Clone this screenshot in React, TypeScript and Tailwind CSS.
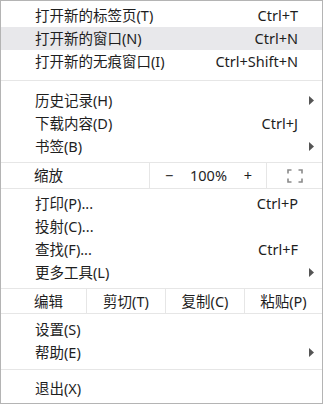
import React from "react";

type Item = { label: string; shortcut?: string; submenu?: boolean; active?: boolean };

const font = { fontFamily: '"Noto Sans", "Noto Sans CJK SC", sans-serif' };

function Arrow() {
  return (
    <svg width="5" height="9" viewBox="0 0 5 9" className="absolute right-[8px] top-[7px]">
      <path d="M0 0 L5 4.5 L0 9 Z" fill="#555" />
    </svg>
  );
}

function Row({ label, shortcut, submenu, active }: Item) {
  return (
    <div
      className={`relative flex h-[23px] items-center justify-between pl-[34px] pr-[24px] ${
        active ? "bg-[#e8e8eb]" : ""
      }`}
    >
      <span>{label}</span>
      {shortcut && <span>{shortcut}</span>}
      {submenu && <Arrow />}
    </div>
  );
}

function Separator({ top, bottom }: { top: number; bottom: number }) {
  return (
    <div style={{ paddingTop: top, paddingBottom: bottom }}>
      <div className="h-px bg-[#e6e6e6]" />
    </div>
  );
}

function FullscreenIcon() {
  return (
    <svg width="16" height="14" viewBox="0 0 16 14" fill="none" stroke="#8a8a8a" strokeWidth="1.6">
      <path d="M1 4.5 V1 H4.5" />
      <path d="M11.5 1 H15 V4.5" />
      <path d="M15 9.5 V13 H11.5" />
      <path d="M4.5 13 H1 V9.5" />
    </svg>
  );
}

export default function App() {
  return (
    <div
      className="h-[404px] w-[323px] border border-[#b4b4b4] bg-white pt-[3px] pb-[3px] text-[14.5px] leading-none text-[#1e1e1e]"
      style={font}
    >
      <Row label="打开新的标签页(T)" shortcut="Ctrl+T" />
      <Row label="打开新的窗口(N)" shortcut="Ctrl+N" active />
      <Row label="打开新的无痕窗口(I)" shortcut="Ctrl+Shift+N" />
      <Separator top={7} bottom={8} />
      <Row label="历史记录(H)" submenu />
      <Row label="下载内容(D)" shortcut="Ctrl+J" />
      <Row label="书签(B)" submenu />
      <div className="pt-[4px]">
        <div className="flex h-[27px] border-y border-[#e6e6e6]">
          <div className="flex w-[148px] items-center pl-[33px]">缩放</div>
          <div className="flex w-[118px] items-center justify-between border-x border-[#e6e6e6] pl-[15px] pr-[14px]">
            <span>−</span>
            <span>100%</span>
            <span>+</span>
          </div>
          <div className="flex flex-1 items-center justify-center">
            <FullscreenIcon />
          </div>
        </div>
      </div>
      <div className="pt-[3px]">
        <Row label="打印(P)..." shortcut="Ctrl+P" />
        <Row label="投射(C)..." />
        <Row label="查找(F)..." shortcut="Ctrl+F" />
        <Row label="更多工具(L)" submenu />
      </div>
      <div className="pt-[4px]">
        <div className="flex h-[26px] border-y border-[#e6e6e6]">
          <div className="flex w-[85px] items-center pl-[33px]">编辑</div>
          <div className="flex w-[79px] items-center justify-center border-l border-[#e6e6e6]">剪切(T)</div>
          <div className="flex w-[79px] items-center justify-center border-l border-[#e6e6e6]">复制(C)</div>
          <div className="flex flex-1 items-center justify-center border-l border-[#e6e6e6]">粘贴(P)</div>
        </div>
      </div>
      <div className="pt-[4px]">
        <Row label="设置(S)" />
        <Row label="帮助(E)" submenu />
      </div>
      <Separator top={5} bottom={7} />
      <Row label="退出(X)" />
    </div>
  );
}
